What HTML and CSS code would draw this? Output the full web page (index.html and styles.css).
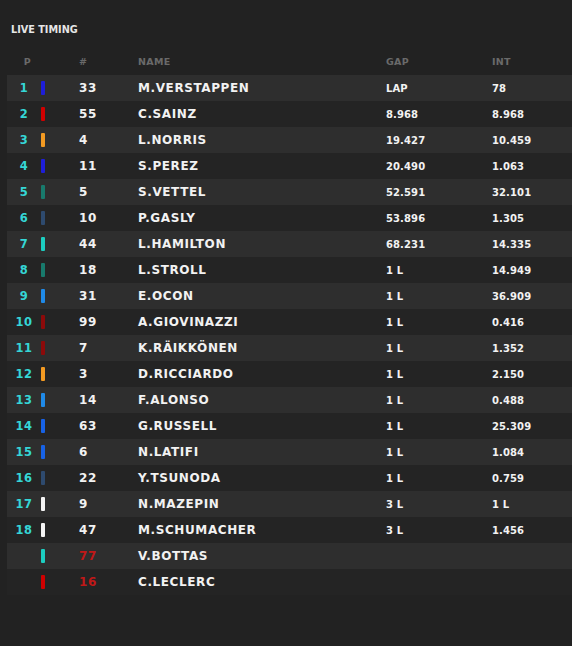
FILE: index.html
```html
<!DOCTYPE html>
<html>
<head>
<meta charset="utf-8">
<link rel="stylesheet" href="styles.css">
</head>
<body>
<div class="page">
  <h1 class="title">LIVE TIMING</h1>
  <div class="table">
    <div class="row head">
      <span class="pos">P</span><span class="num">#</span><span class="name">NAME</span><span class="gap">GAP</span><span class="int">INT</span>
    </div>
    <div class="row"><span class="pos">1</span><i class="bar" style="background:#1e1ed8"></i><span class="num">33</span><span class="name">M.VERSTAPPEN</span><span class="gap">LAP</span><span class="int">78</span></div>
    <div class="row"><span class="pos">2</span><i class="bar" style="background:#d00000"></i><span class="num">55</span><span class="name">C.SAINZ</span><span class="gap">8.968</span><span class="int">8.968</span></div>
    <div class="row"><span class="pos">3</span><i class="bar" style="background:#f39a22"></i><span class="num">4</span><span class="name">L.NORRIS</span><span class="gap">19.427</span><span class="int">10.459</span></div>
    <div class="row"><span class="pos">4</span><i class="bar" style="background:#1e1ed8"></i><span class="num">11</span><span class="name">S.PEREZ</span><span class="gap">20.490</span><span class="int">1.063</span></div>
    <div class="row"><span class="pos">5</span><i class="bar" style="background:#187a6c"></i><span class="num">5</span><span class="name">S.VETTEL</span><span class="gap">52.591</span><span class="int">32.101</span></div>
    <div class="row"><span class="pos">6</span><i class="bar" style="background:#2e4a6e"></i><span class="num">10</span><span class="name">P.GASLY</span><span class="gap">53.896</span><span class="int">1.305</span></div>
    <div class="row"><span class="pos">7</span><i class="bar" style="background:#1ccdc0"></i><span class="num">44</span><span class="name">L.HAMILTON</span><span class="gap">68.231</span><span class="int">14.335</span></div>
    <div class="row"><span class="pos">8</span><i class="bar" style="background:#187a6c"></i><span class="num">18</span><span class="name">L.STROLL</span><span class="gap">1 L</span><span class="int">14.949</span></div>
    <div class="row"><span class="pos">9</span><i class="bar" style="background:#1f8ae8"></i><span class="num">31</span><span class="name">E.OCON</span><span class="gap">1 L</span><span class="int">36.909</span></div>
    <div class="row"><span class="pos">10</span><i class="bar" style="background:#8c0a0a"></i><span class="num">99</span><span class="name">A.GIOVINAZZI</span><span class="gap">1 L</span><span class="int">0.416</span></div>
    <div class="row"><span class="pos">11</span><i class="bar" style="background:#8c0a0a"></i><span class="num">7</span><span class="name">K.RÄIKKÖNEN</span><span class="gap">1 L</span><span class="int">1.352</span></div>
    <div class="row"><span class="pos">12</span><i class="bar" style="background:#f39a22"></i><span class="num">3</span><span class="name">D.RICCIARDO</span><span class="gap">1 L</span><span class="int">2.150</span></div>
    <div class="row"><span class="pos">13</span><i class="bar" style="background:#1f8ae8"></i><span class="num">14</span><span class="name">F.ALONSO</span><span class="gap">1 L</span><span class="int">0.488</span></div>
    <div class="row"><span class="pos">14</span><i class="bar" style="background:#1762e6"></i><span class="num">63</span><span class="name">G.RUSSELL</span><span class="gap">1 L</span><span class="int">25.309</span></div>
    <div class="row"><span class="pos">15</span><i class="bar" style="background:#1762e6"></i><span class="num">6</span><span class="name">N.LATIFI</span><span class="gap">1 L</span><span class="int">1.084</span></div>
    <div class="row"><span class="pos">16</span><i class="bar" style="background:#2e4a6e"></i><span class="num">22</span><span class="name">Y.TSUNODA</span><span class="gap">1 L</span><span class="int">0.759</span></div>
    <div class="row"><span class="pos">17</span><i class="bar" style="background:#f4f4f4"></i><span class="num">9</span><span class="name">N.MAZEPIN</span><span class="gap">3 L</span><span class="int">1 L</span></div>
    <div class="row"><span class="pos">18</span><i class="bar" style="background:#f4f4f4"></i><span class="num">47</span><span class="name">M.SCHUMACHER</span><span class="gap">3 L</span><span class="int">1.456</span></div>
    <div class="row"><span class="pos"></span><i class="bar" style="background:#1ccdc0"></i><span class="num out">77</span><span class="name">V.BOTTAS</span><span class="gap"></span><span class="int"></span></div>
    <div class="row"><span class="pos"></span><i class="bar" style="background:#d00000"></i><span class="num out">16</span><span class="name">C.LECLERC</span><span class="gap"></span><span class="int"></span></div>
  </div>
</div>
</body>
</html>
```

FILE: styles.css
```css
html, body {
  margin: 0;
  padding: 0;
  background: #222222;
}
.page {
  width: 572px;
  height: 646px;
  background: #222222;
  font-family: "DejaVu Sans", sans-serif;
  color: #f2f2f2;
}
.title {
  margin: 0;
  padding: 23px 0 0 11px;
  font-size: 9.7px;
  font-weight: bold;
  line-height: 14px;
  color: #e6e6e6;
}
.table {
  margin: 10px 0 0 7px;
}
.row {
  display: grid;
  grid-template-columns: 34px 4px 34px 59px 248px 106px 80px;
  height: 26px;
  align-items: center;
  font-size: 12px;
  font-weight: bold;
  letter-spacing: 0.6px;
  white-space: nowrap;
}
.pos { grid-column: 1; }
.bar { grid-column: 2; }
.num { grid-column: 4; }
.name { grid-column: 5; }
.gap { grid-column: 6; }
.int { grid-column: 7; }
.gap, .int {
  font-size: 10px;
  letter-spacing: 0.1px;
}
.row:nth-child(even) { background: #2e2e2e; }
.row:nth-child(odd) { background: #242424; }
.row.head {
  background: transparent;
  height: 28px;
  font-size: 9.5px;
  color: #6a6a6a;
  letter-spacing: 0.3px;
}
.row.head .gap, .row.head .int {
  font-size: 9.5px;
  letter-spacing: 0.3px;
}
.pos {
  text-align: center;
  color: #35d6d6;
  font-size: 11.5px;
  letter-spacing: 0.4px;
}
.row.head .pos {
  padding-left: 7px;
  color: #6a6a6a;
  font-size: 9.5px;
}
.bar {
  width: 4px;
  height: 14px;
  border-radius: 1px;
}
.num.out { color: #c01818; }
```
